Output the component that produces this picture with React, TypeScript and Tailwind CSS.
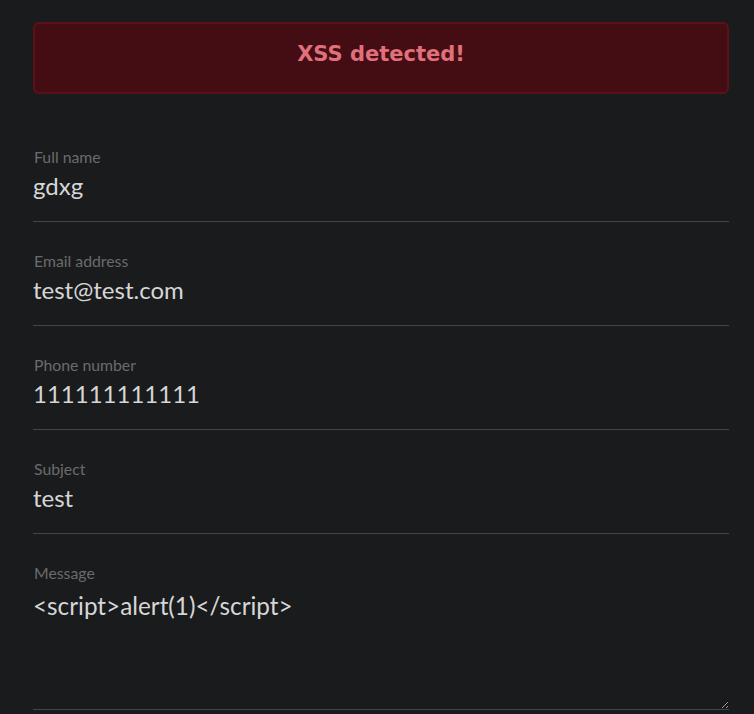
import { useState } from 'react';

// Contact form state after a blocked submission
type Field = { id: string; label: string; value: string; type?: string };

const fields: Field[] = [
  { id: 'name', label: 'Full name', value: 'gdxg' },
  { id: 'email', label: 'Email address', value: 'test@test.com', type: 'email' },
  { id: 'phone', label: 'Phone number', value: '111111111111', type: 'tel' },
  { id: 'subject', label: 'Subject', value: 'test' },
];

export default function App() {
  const [values, setValues] = useState<Record<string, string>>(
    Object.fromEntries(fields.map((f) => [f.id, f.value]))
  );
  const [message, setMessage] = useState('<script>alert(1)</script>');

  return (
    <div
      className="min-h-[714px] bg-[#1a1b1d] pl-[33px] pr-[25px] pt-[22px]"
      style={{ fontFamily: 'Lato, "Open Sans", sans-serif' }}
    >
      {/* Alert */}
      <div className="flex h-[72px] items-center justify-center rounded-[6px] border-2 border-[#5c1119] bg-[#440d13] pb-[6px]">
        <h2
          className="text-[21px] font-bold text-[#e0707b]"
          style={{ fontFamily: '"DejaVu Sans", sans-serif' }}
        >
          XSS detected!
        </h2>
      </div>

      {/* Form */}
      <form className="mt-[24px] flex flex-col" onSubmit={(e) => e.preventDefault()}>
        {fields.map((f) => (
          <div key={f.id} className="flex flex-col pt-[29px]">
            <label htmlFor={f.id} className="h-5 pl-px text-[15.8px] leading-5 text-[#6b6b6b]">
              {f.label}
            </label>
            <input
              id={f.id}
              type={f.type ?? 'text'}
              value={values[f.id]}
              onChange={(e) => setValues({ ...values, [f.id]: e.target.value })}
              className="h-[55px] border-b border-[#444547] bg-transparent pb-[21px] pt-[4px] text-[24px] leading-[30px] text-[#d6d6d6] outline-none"
            />
          </div>
        ))}

        {/* Message */}
        <div className="flex flex-col pt-[29px]">
          <label htmlFor="message" className="h-5 pl-px text-[15.8px] leading-5 text-[#6b6b6b]">
            Message
          </label>
          <textarea
            id="message"
            value={message}
            onChange={(e) => setMessage(e.target.value)}
            className="h-[127px] border-b border-[#444547] bg-transparent pt-[8px] text-[24.3px] leading-[30px] text-[#d6d6d6] outline-none"
          />
        </div>
      </form>
    </div>
  );
}
